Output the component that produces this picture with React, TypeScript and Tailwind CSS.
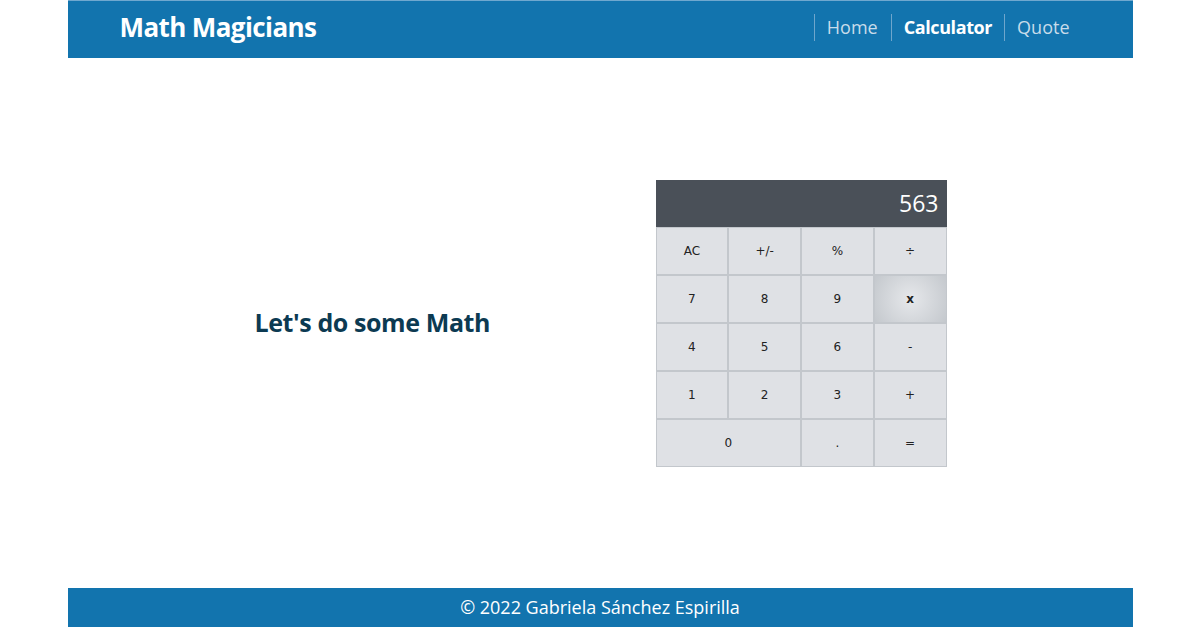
import React, { useState } from "react";

const keys = [
  ["AC", "+/-", "%", "÷"],
  ["7", "8", "9", "x"],
  ["4", "5", "6", "-"],
  ["1", "2", "3", "+"],
];

const btn =
  "h-[48px] border border-[#c3c7cc] text-[12px] text-[#222] font-['DejaVu_Sans',sans-serif]";

const Calculator = () => {
  const [display] = useState("563");

  return (
    <div className="w-[291px]">
      <div className="h-[47px] bg-[#4a5058] text-white text-[23px] flex items-center justify-end px-[8px] font-['Open_Sans',sans-serif]">
        {display}
      </div>
      <div className="grid grid-cols-4 bg-[#dfe1e5]">
        {keys.flat().map((k) => (
          <button
            key={k}
            className={
              btn +
              " " +
              (k === "x"
                ? "bg-[radial-gradient(circle,#e6e8eb_0%,#c4c8cd_100%)] font-bold"
                : "bg-[#dfe1e5]")
            }
          >
            {k}
          </button>
        ))}
        <button className={btn + " col-span-2 bg-[#dfe1e5]"}>0</button>
        <button className={btn + " bg-[#dfe1e5]"}>.</button>
        <button className={btn + " bg-[#dfe1e5]"}>=</button>
      </div>
    </div>
  );
};

const App = () => {
  return (
    <div className="w-[1065px] mx-auto h-[627px] flex flex-col font-['Open_Sans',sans-serif]">
      <header className="h-[58px] bg-[#1274ae] border-t border-[#6fa8cf] flex items-center justify-between pl-[52px] pr-[63px] pb-[4px]">
        <h1 className="text-white text-[26px] font-bold tracking-[-0.6px]">Math Magicians</h1>
        <nav className="flex items-center">
          <a className="border-l border-[#6ea6cc] pl-[12px] pr-[13px] text-[18px] text-[#c8dcea]">Home</a>
          <a className="border-l border-[#6ea6cc] pl-[12px] pr-[12px] text-[18px] text-white font-bold tracking-[-0.4px]">Calculator</a>
          <a className="border-l border-[#6ea6cc] pl-[12px] text-[18px] text-[#c8dcea]">Quote</a>
        </nav>
      </header>

      <main className="flex-1 flex items-center pl-[187px] gap-[164px]">
        <h2 className="w-[237px] whitespace-nowrap text-[25px] font-bold text-[#0c3a52] tracking-[-0.4px]">
          Let's do some Math
        </h2>
        <Calculator />
      </main>

      <footer className="h-[39px] bg-[#1274ae] flex items-center justify-center text-white text-[18px]">
        © 2022 Gabriela Sánchez Espirilla
      </footer>
    </div>
  );
};

export default App;
